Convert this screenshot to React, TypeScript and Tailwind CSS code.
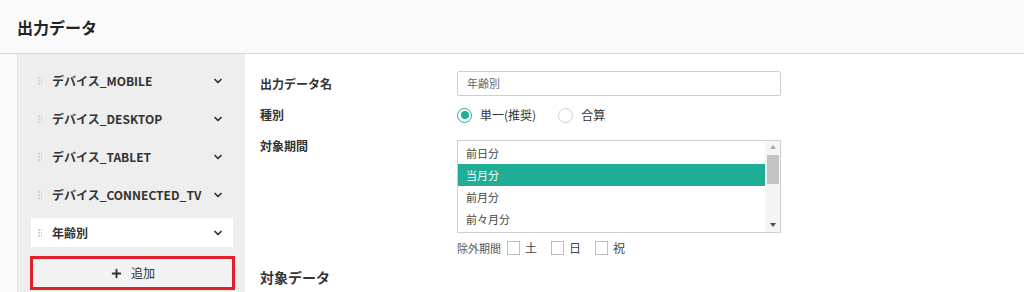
import { ChevronDown, Plus } from "lucide-react";

const font = { fontFamily: '"Noto Sans CJK JP", "Noto Sans", sans-serif' };

const items = [
  "デバイス_MOBILE",
  "デバイス_DESKTOP",
  "デバイス_TABLET",
  "デバイス_CONNECTED_TV",
];

const periods = ["前日分", "当月分", "前月分", "前々月分"];

function Handle() {
  return (
    <span className="mr-[10px] grid grid-cols-2 gap-[1px]">
      {[0, 1, 2, 3, 4, 5].map((i) => (
        <span key={i} className="h-[2px] w-[1.5px] bg-[#d4d4d4]" />
      ))}
    </span>
  );
}

function SideItem({ label, active }: { label: string; active?: boolean }) {
  return (
    <div
      className={`mb-[9px] flex h-[29px] items-center pl-[7px] pr-[9px] ${
        active ? "bg-white" : ""
      }`}
    >
      <Handle />
      <span className="flex-1 text-[12px] font-bold text-[#333]">{label}</span>
      <ChevronDown size={12} strokeWidth={3.5} className="text-[#333]" />
    </div>
  );
}

function Radio({ checked, label }: { checked?: boolean; label: string }) {
  return (
    <label className="mr-[22px] flex items-center">
      <span
        className={`mr-[8px] flex h-[15px] w-[15px] items-center justify-center rounded-full border ${
          checked ? "border-[#1fae95]" : "border-[#cfcfcf]"
        }`}
      >
        {checked && <span className="h-[8px] w-[8px] rounded-full bg-[#1fae95]" />}
      </span>
      <span className="text-[12px] text-[#333]">{label}</span>
    </label>
  );
}

function Check({ label }: { label: string }) {
  return (
    <span className="ml-[6px] mr-[8px] flex items-center">
      <span className="mr-[5px] h-[14px] w-[13px] border border-[#bdbdbd] bg-white" />
      <span className="text-[12px] text-[#444]">{label}</span>
    </span>
  );
}

export default function App() {
  return (
    <div style={font} className="h-[292px] w-[1024px] overflow-hidden bg-[#fafafa]">
      <div className="flex h-[54px] items-center border-b border-[#d9d9d9] pl-[17px]">
        <h1 className="text-[16px] font-bold text-[#222]">出力データ</h1>
      </div>
      <div className="flex h-[238px] pl-[17px]">
        <aside className="w-[228px] border-l border-[#e3e3e3] bg-[#eeeeee] pl-[13px] pr-[12px] pt-[12px]">
          {items.map((it) => (
            <SideItem key={it} label={it} />
          ))}
          <SideItem label="年齢別" active />
          <button className="-ml-[1px] flex h-[34px] w-[205px] items-center justify-center border-[3px] border-[#e0202b] bg-[#f2f2f2] text-[12px] text-[#333]">
            <Plus size={13} strokeWidth={3.5} className="mr-[8px]" />
            追加
          </button>
        </aside>
        <main className="flex-1 bg-white pl-[15px] pt-[17px]">
          <div className="flex h-[25px] items-center">
            <span className="w-[197px] text-[12px] font-bold text-[#333]">出力データ名</span>
            <div className="flex h-[25px] w-[324px] items-center rounded-[2px] border border-[#cfcfcf] pl-[9px] text-[11px] text-[#666]">
              年齢別
            </div>
          </div>
          <div className="mt-[7px] flex h-[24px] items-center">
            <span className="w-[197px] text-[12px] font-bold text-[#333]">種別</span>
            <Radio checked label="単一(推奨)" />
            <Radio label="合算" />
          </div>
          <div className="mt-[13px] flex">
            <span className="-mt-[3px] w-[197px] text-[12px] font-bold text-[#333]">対象期間</span>
            <div>
              <div className="flex h-[93px] w-[324px] border border-[#cfcfcf] bg-white">
                <div className="flex-1 pt-[1px]">
                  {periods.map((p, i) => (
                    <div
                      key={p}
                      className={`flex h-[22px] items-center pl-[8px] text-[11px] ${
                        i === 1 ? "bg-[#1fae95] text-white" : "text-[#444]"
                      }`}
                    >
                      {p}
                    </div>
                  ))}
                </div>
                <div className="flex w-[15px] flex-col items-center bg-[#f5f5f5]">
                  <span className="mt-[4px] h-0 w-0 border-x-[3px] border-b-[4px] border-x-transparent border-b-[#a8a8a8]" />
                  <span className="mt-[6px] h-[29px] w-[12px] bg-[#c3c3c3]" />
                  <span className="flex-1" />
                  <span className="mb-[5px] h-0 w-0 border-x-[3px] border-t-[4px] border-x-transparent border-t-[#505050]" />
                </div>
              </div>
              <div className="mt-[7px] flex h-[16px] items-center">
                <span className="text-[11px] text-[#555]">除外期間</span>
                <Check label="土" />
                <Check label="日" />
                <Check label="祝" />
              </div>
            </div>
          </div>
          <div className="mt-[11px] text-[14px] font-bold text-[#333]">対象データ</div>
        </main>
      </div>
    </div>
  );
}
